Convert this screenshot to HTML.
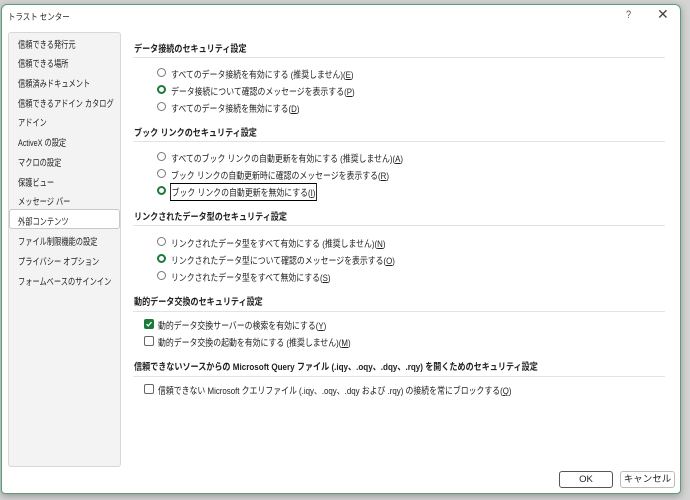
<!DOCTYPE html><html><head><meta charset="utf-8"><style>
*{margin:0;padding:0;box-sizing:border-box}
body{width:690px;height:500px;background:#d4d4d4;position:relative;overflow:hidden;font-family:"Liberation Sans","Noto Sans CJK JP",sans-serif;font-size:9.5px;color:#222}
.win{position:absolute;left:1px;top:4px;width:680px;height:490px;background:#fff;border:1px solid #5a9e78;border-radius:6px 6px 4px 4px;box-shadow:0 2px 8px rgba(0,0,0,.3)}
.t{position:absolute;white-space:nowrap;transform:scaleX(.83);transform-origin:0 0}
.s{transform:scaleX(.76)}
.h{font-weight:bold;font-size:9.5px;transform:scaleX(.85)}
.side{position:absolute;left:8px;top:32px;width:113px;height:435px;background:#f3f3f3;border:1px solid #d8d8d8;border-radius:3px}
.sel{position:absolute;left:9px;top:209px;width:111px;height:20px;background:#fff;border:1px solid #c8c8c8;border-radius:3px}
.line{position:absolute;left:133px;width:532px;height:1px;background:#e3e3e3}
.r{position:absolute;width:9px;height:9px;border:1px solid #777;border-radius:50%;background:#fff}
.r.on{border:2.5px solid #1a7a3a}
.c{position:absolute;width:10px;height:10px;border:1px solid #666;border-radius:2px;background:#fff}
.c.on{background:#1a7a3a;border-color:#1a7a3a}
.btn{position:absolute;top:471px;height:17px;border:1px solid #bbb;border-radius:3px;text-align:center;line-height:15px;font-size:9.5px}
</style></head><body>
<div class="win"></div>
<div class="t" style="left:8px;top:10px;font-size:9px">トラスト センター</div>
<div class="t" style="left:626px;top:9px;font-size:11px;color:#555">?</div>
<div class="t" style="left:657px;top:6px;font-size:14px;color:#444;transform:none">✕</div>
<div class="side"></div><div class="sel"></div>
<div class="t s" style="left:18px;top:37px">信頼できる発行元</div>
<div class="t s" style="left:18px;top:56px">信頼できる場所</div>
<div class="t s" style="left:18px;top:76px">信頼済みドキュメント</div>
<div class="t s" style="left:18px;top:96px">信頼できるアドイン カタログ</div>
<div class="t s" style="left:18px;top:115px">アドイン</div>
<div class="t s" style="left:18px;top:135px">ActiveX の設定</div>
<div class="t s" style="left:18px;top:155px">マクロの設定</div>
<div class="t s" style="left:18px;top:175px">保護ビュー</div>
<div class="t s" style="left:18px;top:194px">メッセージ バー</div>
<div class="t s" style="left:18px;top:214px">外部コンテンツ</div>
<div class="t s" style="left:18px;top:234px">ファイル制限機能の設定</div>
<div class="t s" style="left:18px;top:254px">プライバシー オプション</div>
<div class="t s" style="left:18px;top:274px">フォームベースのサインイン</div>

<div class="t h" style="left:134px;top:41px">データ接続のセキュリティ設定</div><div class="line" style="top:57px"></div>
<div class="r" style="left:157px;top:68px"></div><div class="t" style="left:171px;top:67px">すべてのデータ接続を有効にする (推奨しません)(<u>E</u>)</div>
<div class="r on" style="left:157px;top:85px"></div><div class="t" style="left:171px;top:84px">データ接続について確認のメッセージを表示する(<u>P</u>)</div>
<div class="r" style="left:157px;top:102px"></div><div class="t" style="left:171px;top:101px">すべてのデータ接続を無効にする(<u>D</u>)</div>

<div class="t h" style="left:134px;top:125px">ブック リンクのセキュリティ設定</div><div class="line" style="top:141px"></div>
<div class="r" style="left:157px;top:152px"></div><div class="t" style="left:171px;top:151px">すべてのブック リンクの自動更新を有効にする (推奨しません)(<u>A</u>)</div>
<div class="r" style="left:157px;top:169px"></div><div class="t" style="left:171px;top:168px">ブック リンクの自動更新時に確認のメッセージを表示する(<u>R</u>)</div>
<div class="r on" style="left:157px;top:186px"></div><div class="t" style="left:170px;top:183px;border:1px solid #000;padding:1px 1px">ブック リンクの自動更新を無効にする(<u>I</u>)</div>

<div class="t h" style="left:134px;top:209px">リンクされたデータ型のセキュリティ設定</div><div class="line" style="top:225px"></div>
<div class="r" style="left:157px;top:237px"></div><div class="t" style="left:171px;top:236px">リンクされたデータ型をすべて有効にする (推奨しません)(<u>N</u>)</div>
<div class="r on" style="left:157px;top:254px"></div><div class="t" style="left:171px;top:253px">リンクされたデータ型について確認のメッセージを表示する(<u>O</u>)</div>
<div class="r" style="left:157px;top:271px"></div><div class="t" style="left:171px;top:270px">リンクされたデータ型をすべて無効にする(<u>S</u>)</div>

<div class="t h" style="left:134px;top:294px">動的データ交換のセキュリティ設定</div><div class="line" style="top:311px"></div>
<div class="c on" style="left:144px;top:319px"><svg width="8" height="8" viewBox="0 0 8 8" style="position:absolute;left:0;top:0"><path d="M1.5 4.2 L3.2 5.8 L6.5 2.2" stroke="#fff" stroke-width="1.3" fill="none"/></svg></div><div class="t" style="left:158px;top:318px">動的データ交換サーバーの検索を有効にする(<u>Y</u>)</div>
<div class="c" style="left:144px;top:336px"></div><div class="t" style="left:158px;top:335px">動的データ交換の起動を有効にする (推奨しません)(<u>M</u>)</div>

<div class="t h" style="left:134px;top:359px">信頼できないソースからの Microsoft Query ファイル (.iqy、.oqy、.dqy、.rqy) を開くためのセキュリティ設定</div><div class="line" style="top:376px"></div>
<div class="c" style="left:144px;top:384px"></div><div class="t" style="left:158px;top:383px">信頼できない Microsoft クエリファイル (.iqy、.oqy、.dqy および .rqy) の接続を常にブロックする(<u>Q</u>)</div>

<div class="btn" style="left:559px;width:54px;border:1.5px solid #555">OK</div>
<div class="btn" style="left:620px;width:55px">キャンセル</div>
</body></html>
